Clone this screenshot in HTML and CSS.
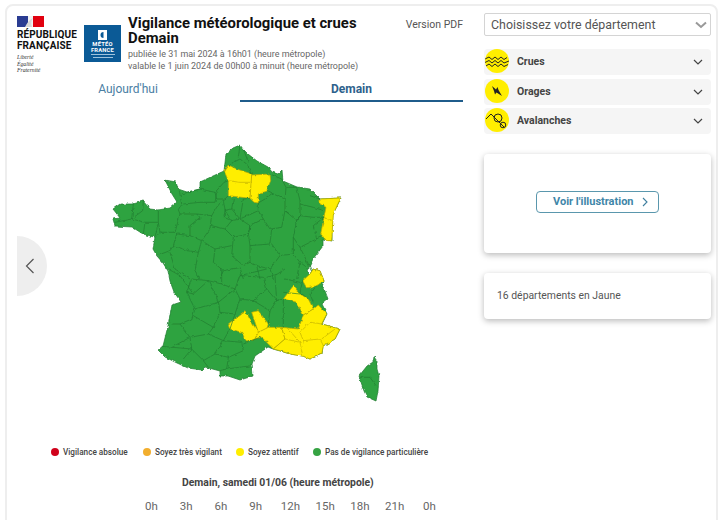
FILE: index.html
```html
<!DOCTYPE html>
<html lang="fr">
<head>
<meta charset="utf-8">
<title>Vigilance météorologique et crues</title>
<link rel="stylesheet" href="styles.css">
</head>
<body>
<div class="shell">
  <main class="left">
    <header class="head">
      <div class="rf">
        <svg class="flag" viewBox="0 0 27 11" width="27" height="11"><rect width="11" height="11" fill="#2a3c92"/><rect x="11" width="5" height="11" fill="#f2f2f2"/><rect x="16" width="11" height="11" fill="#e1000f"/><path d="M8 11 C10 7 12 4 16 2 C14 5 14 8 15 11Z" fill="#d8d8d8"/></svg>
        <div class="rf-name">RÉPUBLIQUE<br>FRANÇAISE</div>
        <div class="rf-motto">Liberté<br>Égalité<br>Fraternité</div>
      </div>
      <div class="mf">
        <svg class="mf-icon" viewBox="0 0 9 10" width="9" height="10"><rect width="9" height="10" fill="#fff"/><path d="M5.5 2A3 3 0 1 0 5.5 8Z" fill="#0b5a96"/></svg>
        <div class="mf-name">MÉTÉO<br>FRANCE</div>
        <svg class="mf-bars" viewBox="0 0 24 5" width="24" height="5"><rect width="24" height="1" fill="#9fc3dd"/><rect x="2" y="3" width="20" height="1" fill="#9fc3dd"/></svg>
      </div>
      <div class="titles">
        <div class="title-row">
          <h1>Vigilance météorologique et crues<br>Demain</h1>
          <span class="pdf">Version PDF</span>
        </div>
        <p class="sub">publiée le 31 mai 2024 à 16h01 (heure métropole)<br>valable le 1 juin 2024 de 00h00 à minuit (heure métropole)</p>
      </div>
    </header>
    <nav class="tabs">
      <span class="tab">Aujourd'hui</span>
      <span class="tab active">Demain</span>
    </nav>
    <div class="map-zone">
      <svg class="map" viewBox="100 140 250 270" width="250" height="270">
        <defs>
          <filter id="rough" x="-5%" y="-5%" width="110%" height="110%">
            <feTurbulence type="fractalNoise" baseFrequency=".22" numOctaves="2" seed="4" result="n"/>
            <feDisplacementMap in="SourceGraphic" in2="n" scale="3" xChannelSelector="R" yChannelSelector="G" result="d"/>
            <feGaussianBlur in="d" stdDeviation=".3"/>
          </filter>
        </defs>
        <g class="rough">
        <path class="land" d="M226 155L233 149L240 146L243 150L248 155L257 162L268 168L272 173L278 175L282 171L283 182L297 188L310 190L320 200L341 199L333 215L332 230L332 242L323 240L323 247L313 260L307 272L310 275L313 270L320 272L324 282L322 288L325 292L328 300L322 305L327 315L322 325L340 330L335 340L323 347L322 355L310 360L303 357L290 355L280 352L273 350L268 348L255 357L252 365L253 377L240 381L228 377L220 377L220 372L205 368L202 371L188 369L177 364L165 358L158 351L163 347L168 327L172 306L181 303L174 293L170 282L168 272L163 264L157 257L153 250L155 238L143 235L132 228L115 227L113 220L120 219L113 210L120 205L133 205L143 202L150 210L158 211L170 209L177 203L172 195L165 181L176 183L178 190L187 193L200 190L200 183L213 177L224 172Z"/>
        <path class="land" d="M374 358L377 362L377 370L379 377L378 392L376 402L367 398L364 392L359 377L367 367L373 363Z"/>
        <g class="z4">
          <path class="yl" d="M372 95L385 78L410 90L455 105L455 130L450 178L385 170L385 125Z"/>
          <path class="yl" d="M455 108L510 105L512 125L500 155L475 165L475 192L462 190L450 178Z"/>
          <path class="yl" d="M660 180L722 177L700 225L695 305L680 305L662 285L672 235L678 205L660 195Z"/>
          <path class="yi" d="M385 125L420 130L455 130M672 235L695 245"/>
          <path class="di" d="M385 78L420 60L440 75L455 105M430 30L445 70M420 18L415 55M510 105L545 120L558 145L555 185L555 215L570 225M590 145L600 185L600 230M630 170L660 180M600 195L640 205L672 215M600 230L640 235L672 235M500 155L520 165L555 180M475 192L520 165M300 150L345 160L372 130L385 125M345 160L350 180L375 180L385 170M238 155L245 195M245 165L300 150M250 195L300 190L345 190L350 160M245 195L235 212L240 225M175 212L175 250L180 280L225 280L240 225M240 225L290 225L300 235L270 260L270 290L230 285M290 225L335 230L350 205L370 180M335 230L330 270L305 305L270 290M370 180L375 215L395 245L420 240L430 180L450 178M375 215L395 210L400 180M420 240L475 215L475 192M395 245L375 270L335 260M375 270L400 295L445 285L450 260L420 240M475 215L490 240L450 260M490 240L510 270L545 265L555 215M555 215L590 245L600 230M590 245L580 295L600 325L650 300L665 290M450 260L445 285L450 320L510 315L515 270M515 315L540 350L580 345L580 295M580 345L600 370L635 395M540 350L510 390L520 420M400 295L395 350L430 380L450 370L450 320M305 305L345 330L395 320M345 330L340 370L370 395L420 385M305 305L295 340L285 395M230 285L220 320L265 335L295 340M180 280L165 295M170 350L210 335L220 320M210 340L225 390L270 420M100 195L95 240L45 250M95 240L135 250L175 250M135 250L130 285M130 185L128 215L95 240M175 250L165 295M375 215L372 235L395 245M395 210L420 240M560 145L590 145M600 230L590 245M650 300L640 260L672 235M600 325L635 395M285 395L300 420M420 385L430 420M510 390L470 380L450 370M470 380L480 420M600 370L590 420M370 395L360 420"/>
        </g>
        <g class="z5">
          <path class="yl" d="M488 35L510 15L520 0L540 5L552 35L530 50L500 57Z"/>
          <path class="yl" d="M430 90L460 50L480 75L505 90L520 120L490 138L470 100L435 90Z"/>
          <path class="yl" d="M265 165L315 125L335 160L355 190L345 210L320 220L305 190L270 180Z"/>
          <path class="yl" d="M335 130L355 125L385 165L380 180L355 190Z"/>
          <path class="yl" d="M355 190L385 175L425 175L435 210L400 240L385 225L365 205L345 210Z"/>
          <path class="yl" d="M425 175L475 180L490 138L520 120L535 108L560 135L545 165L600 180L585 210L550 230L545 255L510 270L490 262L450 255L420 245L400 240L435 210Z"/>
          <path class="yi" d="M480 190L510 160L545 165M480 190L490 215L540 210L550 230M440 175L480 220L488 260M435 210L480 220M490 215L488 225M545 210L585 180"/>
          <path class="di" d="M120 20L160 75L140 70M155 30L140 70L165 120L155 150L120 165L95 165M205 35L225 75L235 100L285 60L245 45L245 0M165 120L235 100L240 130L220 175L160 140M240 130L285 135L300 90L285 60L300 20L380 0M300 90L340 95L380 60L370 25L300 20M340 95L390 125L410 95L380 60M410 95L430 90L430 175M390 125L385 165M410 95L405 20L435 0M430 70L480 75M380 25L410 15M480 40L435 30M488 35L480 70M220 175L205 195L150 205L120 165M150 205L95 235M150 205L155 240L130 270M65 232L155 240M205 195L250 215L270 180M250 215L225 255L190 275L155 240M225 255L265 265L310 245L305 220L250 215M190 275L205 295M265 265L260 300L240 305M260 300L335 290M310 225L360 205M480 70L505 90M530 50L510 75L520 100M660 325L690 325L708 350M160 75L205 35M205 35L155 30M285 135L270 180M120 20L85 0M245 45L205 35"/>
        </g>
        </g>
      </svg>
      <button class="prev" type="button" aria-label="Précédent">
        <svg viewBox="0 0 10 16" width="10" height="16"><path d="M8.5 1L1.5 8L8.5 15" fill="none" stroke="#555" stroke-width="1.2"/></svg>
      </button>
    </div>
    <ul class="legend">
      <li><i class="dot red"></i>Vigilance absolue</li>
      <li><i class="dot orange"></i>Soyez très vigilant</li>
      <li><i class="dot yellow"></i>Soyez attentif</li>
      <li><i class="dot green"></i>Pas de vigilance particulière</li>
    </ul>
    <h2 class="day">Demain, samedi 01/06 (heure métropole)</h2>
    <div class="hours"><span>0h</span><span>3h</span><span>6h</span><span>9h</span><span>12h</span><span>15h</span><span>18h</span><span>21h</span><span>0h</span></div>
  </main>
  <aside class="right">
    <div class="select">
      <span>Choisissez votre département</span>
      <svg viewBox="0 0 12 8" width="12" height="8"><path d="M1 1.5L6 6L11 1.5" fill="none" stroke="#999" stroke-width="2"/></svg>
    </div>
    <div class="rows">
      <div class="row">
        <span class="badge"><svg viewBox="0 0 24 24" width="24" height="24"><path d="M0 10L4 8L7 10.5L10 8L13 10.5L16 8L19 10.5L22 8.5M0 13.5L4 11.5L7 14L10 11.5L13 14L16 11.5L19 14L24 12M1 17L4 15L7 17.5L10 15L13 17.5L16 15L19 17.5L23 15.5" fill="none" stroke="#222" stroke-width="1"/></svg></span>
        <span class="label">Crues</span>
        <svg class="chev" viewBox="0 0 10 6" width="10" height="6"><path d="M1 1L5 5L9 1" fill="none" stroke="#444" stroke-width="1.2"/></svg>
      </div>
      <div class="row">
        <span class="badge"><svg viewBox="0 0 24 24" width="24" height="24"><path d="M7 7L11 10.5L12.5 8L13.5 11L17 17L11.5 13.5L10 15.5L9 12Z" fill="#222"/></svg></span>
        <span class="label">Orages</span>
        <svg class="chev" viewBox="0 0 10 6" width="10" height="6"><path d="M1 1L5 5L9 1" fill="none" stroke="#444" stroke-width="1.2"/></svg>
      </div>
      <div class="row">
        <span class="badge"><svg viewBox="0 0 24 24" width="24" height="24"><path d="M1 11L6 6L11 11L19 19" fill="none" stroke="#222" stroke-width="1"/><circle cx="13" cy="10" r="4" fill="none" stroke="#222"/><circle cx="18" cy="17" r="2.8" fill="none" stroke="#222"/></svg></span>
        <span class="label">Avalanches</span>
        <svg class="chev" viewBox="0 0 10 6" width="10" height="6"><path d="M1 1L5 5L9 1" fill="none" stroke="#444" stroke-width="1.2"/></svg>
      </div>
    </div>
    <section class="card card-btn">
      <a class="btn">Voir l'illustration
        <svg viewBox="0 0 6 10" width="6" height="10"><path d="M1 1L5 5L1 9" fill="none" stroke="#3f7f9f" stroke-width="1.1"/></svg>
      </a>
    </section>
    <section class="card card-text">16 départements en Jaune</section>
  </aside>
</div>
</body>
</html>
```
FILE: styles.css
```css
* { box-sizing: border-box; }
html, body { margin: 0; height: 520px; overflow: hidden; background: #fff; }
body { font-family: Roboto, "Liberation Sans", sans-serif; color: #444; }
.shell {
  margin: 4px 2px 0 5px;
  height: 560px;
  border: 2px solid #eee;
  border-radius: 8px;
  padding: 7px 5px 0 9px;
  display: grid;
  grid-template-columns: 447px 227px;
  column-gap: 21px;
  align-items: start;
}
.head { display: flex; height: 61px; }
.rf { width: 68px; padding: 3px 0 0 1px; }
.flag { display: block; }
.rf-name { margin-top: 2px; font: 700 10px/11px Roboto, sans-serif; color: #111; letter-spacing: .1px; }
.rf-motto { margin-top: 3px; font: italic 5.7px/6.5px "Liberation Serif", serif; color: #333; }
.mf { width: 37px; height: 37px; margin-top: 12px; background: #0b5a96; display: flex; flex-direction: column; align-items: center; padding-top: 5px; }
.mf-icon { display: block; }
.mf-name { margin-top: 2px; font: 700 5.8px/5.6px Roboto, sans-serif; color: #fff; text-align: center; letter-spacing: .2px; }
.mf-bars { margin-top: 1px; }
.titles { flex: 1; margin-left: 7px; }
.title-row { display: flex; justify-content: space-between; }
h1 { margin: 3px 0 0; font-size: 14.85px; line-height: 15px; font-weight: 700; color: #111; }
.pdf { margin-top: 5px; font-size: 10.5px; line-height: 13px; color: #555; }
.sub { margin: 2px 0 0; font-size: 8.95px; line-height: 12px; color: #666; }
.tabs { display: grid; grid-template-columns: 224px 223px; height: 28px; margin-top: 0; align-items: start; padding-top: 7px; }
.tab { text-align: center; font-size: 12px; line-height: 15px; padding-top: 1px; color: #4a7ea3; }
.tab.active { font-weight: 700; color: #2d618c; border-bottom: 2px solid #1f5c8b; height: 21px; }
.map-zone { position: relative; height: 344px; padding: 37px 0 0 84px; }
.map { display: block; overflow: visible; }
.rough { filter: url(#rough); }
.land { fill: #2fa33f; stroke: #1f7a30; stroke-width: .7; stroke-linejoin: round; }
.z4 { transform: translate(100px, 140px) scale(.33333); }
.z5 { transform: translate(140px, 270px) scale(.33333); }
.yl { fill: #ffee00; stroke: #b8a800; stroke-width: 2.2; stroke-linejoin: round; }
.yi { fill: none; stroke: #b8a800; stroke-width: 1.8; }
.di { fill: none; stroke: #1f7a30; stroke-width: 2; stroke-linejoin: round; }
.prev {
  position: absolute; left: 1px; top: 134px;
  width: 30px; height: 60px; padding: 0 0 0 8px;
  border: 0; border-radius: 0 30px 30px 0; background: #eee;
  display: flex; align-items: center;
}
.legend {
  list-style: none; margin: 0; padding: 0 0 0 35px;
  display: flex; height: 12px;
  font-size: 8.2px; line-height: 12px; font-weight: 500; color: #444;
}
.legend li { display: flex; align-items: center; }
.legend li:nth-child(1) { width: 92px; }
.legend li:nth-child(2) { width: 93px; }
.legend li:nth-child(3) { width: 77px; }
.dot { width: 8px; height: 8px; border-radius: 50%; margin: 0 4px 0 0; }
.red { background: #d0021b; }
.orange { background: #f2ae2e; }
.yellow { background: #ffee00; }
.green { background: #36a343; }
.day { margin: 18px 0 0; padding-left: 166px; font-size: 10.4px; line-height: 13px; font-weight: 700; color: #444; white-space: nowrap; }
.hours { display: grid; grid-template-columns: repeat(9, 34.75px); margin: 10px 0 0 118px; font-size: 11.5px; line-height: 14px; color: #666; text-align: center; }
.select {
  height: 23px; border: 1px solid #d4d4d4; border-radius: 2px;
  display: flex; align-items: center; justify-content: space-between;
  padding: 0 2px 0 6px; font-size: 12.4px; color: #555;
}
.select svg { margin-right: 1px; }
.rows { margin-top: 13px; display: grid; row-gap: 3.5px; }
.row { height: 26px; background: #f5f5f5; border-radius: 4px; display: flex; align-items: center; position: relative; padding: 0 8px 0 33px; }
.badge { position: absolute; left: 1px; top: 0; width: 24px; height: 24px; border-radius: 50%; background: #ffee00; display: block; overflow: hidden; }
.badge svg { display: block; }
.label { flex: 1; font-size: 10.5px; font-weight: 700; color: #444; padding-bottom: 1px; }
.card { border-radius: 4px; background: #fff; box-shadow: 0 2px 6px rgba(0,0,0,.28); }
.card-btn { margin-top: 20px; height: 99px; padding-bottom: 4px; display: flex; align-items: center; justify-content: center; }
.btn { width: 123px; height: 22px; border: 1px solid #5a97ad; border-radius: 4px; display: flex; align-items: center; justify-content: space-between; padding: 0 10px 0 16px; font-size: 11px; font-weight: 700; color: #3f86a8; }
.card-text { margin-top: 20px; height: 46px; padding: 0 0 2px 13px; display: flex; align-items: center; font-size: 10.4px; color: #555; }
```
